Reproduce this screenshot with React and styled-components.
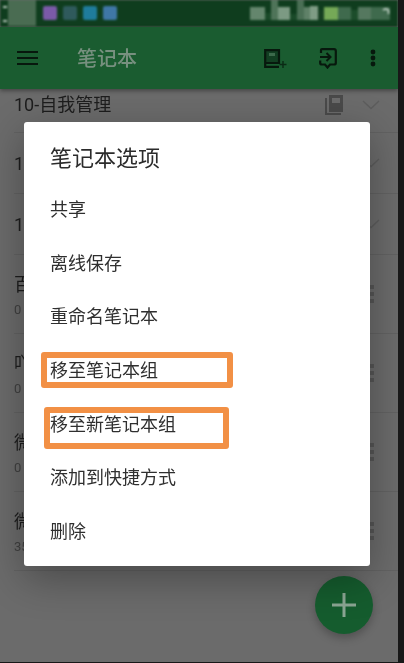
import React from "react";
import styled, { createGlobalStyle } from "styled-components";

const Global = createGlobalStyle`
  html, body { margin: 0; padding: 0; background: #1a1a1a; }
  body { font-family: "Roboto", "Noto Sans CJK SC", sans-serif; overflow: hidden; }
`;
const Shell = styled.div`
  width: 404px; height: 663px; display: flex; background: #181818; overflow: hidden; padding: 0 6px 1px 0; box-sizing: border-box;
`;
const Phone = styled.div`
  position: relative; flex: 1; min-width: 0; display: flex; flex-direction: column; background: #6b6b6b; overflow: hidden;
`;
const StatusBar = styled.div`
  position: relative; height: 27px; flex: none; background: #0f3d1e; display: flex; align-items: flex-start; justify-content: space-between;
  padding-right: 8px; filter: blur(0.8px);
`;
const StatusLeft = styled.div`display: flex; align-items: center; height: 26px;`;
const Marks = styled.div`
  width: 8px; height: 100%; box-sizing: border-box; padding: 6px 1px 4px 3px; display: flex; flex-direction: column; justify-content: space-between;
  i { display: block; height: 2px; width: 4px; background: #b9c9bd; }
`;
const ClockBlur = styled.div`width: 28px; height: 26px; background: #4a6c52; margin-right: 7px;`;
const AppIcon = styled.div`
  width: 14px; height: 14px; margin-right: 6px; background: ${p => p.$c}; border-radius: 2px;
`;
const StatusRight = styled.div`display: flex; align-items: flex-end; height: 20px;`;
const Pixel = styled.div`width: ${p => p.$w}px; height: ${p => p.$h}px; background: ${p => p.$c};`;
const Hook = styled.svg`position: absolute; left: 382px; top: 8px;`;
const Toolbar = styled.header`
  height: 62px; flex: none; background: #1a5c30; display: flex; align-items: center; padding: 0 22px 0 17px;
  box-shadow: 0 2px 4px rgba(0,0,0,.35); z-index: 1; filter: blur(0.45px);
`;
const Burger = styled.div`
  width: 21px; height: 14px; flex: none; display: flex; flex-direction: column; justify-content: space-between; margin-right: 39px;
  span { display: block; height: 2px; background: #07180d; }
`;
const Title = styled.div`flex: 1; font-size: 20px; line-height: 24px; padding-top: 2px; font-weight: 500; color: #77907f;`;
const ToolIcon = styled.svg`flex: none; display: block; margin-left: ${p => p.$ml}px;`;
const List = styled.div`flex: 1; display: flex; flex-direction: column; filter: blur(0.4px);`;
const Row = styled.div`
  height: ${p => p.$h}px; flex: none; box-sizing: border-box; margin-left: 14px; padding-right: 18px; padding-bottom: ${p => p.$pb || 0}px;
  border-bottom: 1px solid #626262; display: flex; align-items: center; justify-content: space-between;
`;
const RowText = styled.div`min-width: 0; padding-top: ${p => p.$pt || 0}px;`;
const RowTitle = styled.div`font-size: 18px; line-height: 24px; color: #1d1d1d; white-space: nowrap;`;
const RowSub = styled.div`font-size: 13px; line-height: 18px; margin-top: 4px; color: #404040; white-space: nowrap;`;
const RowTools = styled.div`display: flex; align-items: center; gap: 18px;`;
const Dots = styled.div`
  width: 4px; display: flex; flex-direction: column; gap: 3px; margin-right: 6px;
  i { display: block; width: 4px; height: 4px; background: #565656; }
`;
const Dialog = styled.div`
  position: absolute; left: 24px; top: 122px; width: 346px; height: 444px; box-sizing: border-box; background: #fff; border-radius: 3px;
  box-shadow: 0 12px 40px rgba(0,0,0,.32); padding: 23px 0 7px; display: flex; flex-direction: column; z-index: 2;
`;
const DialogTitle = styled.div`
  font-size: 22px; line-height: 28px; padding: 0 26px; height: 36px; flex: none; box-sizing: border-box; color: #2b2b2b; filter: blur(0.3px);
`;
const Item = styled.div`
  position: relative; height: 53.7px; flex: none; display: flex; align-items: center; padding-left: 26px; font-size: 18px; color: #2f2f2f;
  span { filter: blur(0.3px); position: relative; }
`;
const Highlight = styled.div`
  position: absolute; left: ${p => p.$l}px; top: ${p => p.$t}px; width: ${p => p.$w}px; height: ${p => p.$h}px; box-sizing: border-box;
  border: 6px solid #f29045; border-radius: 3px; filter: blur(0.3px);
`;
const Fab = styled.div`
  position: absolute; left: 315px; top: 576px; width: 58px; height: 58px; border-radius: 50%; background: #155c2e; z-index: 1;
  box-shadow: 0 4px 8px rgba(0,0,0,.25); display: flex; align-items: center; justify-content: center; filter: blur(0.3px);
`;

const items = [
  { t: "共享" },
  { t: "离线保存" },
  { t: "重命名笔记本" },
  { t: "移至笔记本组", box: { l: 17, t: 10, w: 192, h: 36 } },
  { t: "移至新笔记本组", box: { l: 20, t: 11, w: 185, h: 42 } },
  { t: "添加到快捷方式" },
  { t: "删除" },
];
const pixels = [
  [15, 13, "#64866d"], [6, 7, "#1a4a29"], [7, 20, "#4f7459"], [12, 13, "#7c9a83"], [7, 6, "#1a4a29"], [7, 20, "#4a6f55"], [6, 13, "#5f8168"], [8, 14, "#7f9c85"],
  [6, 10, "#163f22"], [14, 13, "#75a957"], [13, 13, "#3f6a4d"], [7, 10, "#1c4d2b"], [13, 13, "#55785f"], [19, 13, "#3f6a4d"],
];
const lower = [["百", "0"], ["吖", "0"], ["微", "0"], ["微", "35"]];
const Chevron = () => (
  <svg width="18" height="10" viewBox="0 0 18 10" fill="none" stroke="#5d5d5d" strokeWidth="1.4" style={{ display: "block" }}>
    <path d="M1 1 L9 8.5 L17 1" />
  </svg>
);

export default function App() {
  return (
    <Shell>
      <Global />
      <Phone>
        <StatusBar>
          <StatusLeft>
            <Marks><i /><i /></Marks>
            <ClockBlur />
            <AppIcon $c="#7a5aa8" />
            <AppIcon $c="#2f5a5c" />
            <AppIcon $c="#1f7c9c" />
            <AppIcon $c="#3f77a6" />
          </StatusLeft>
          <StatusRight>
            {pixels.map(([w, h, c], i) => <Pixel key={i} $w={w} $h={h} $c={c} />)}
          </StatusRight>
          <Hook width="8" height="7" viewBox="0 0 8 7" fill="none" stroke="#d8e2da" strokeWidth="1.4"><path d="M1 2 Q4 0 6.5 2 V6" /></Hook>
        </StatusBar>
        <Toolbar>
          <Burger><span /><span /><span /></Burger>
          <Title>笔记本</Title>
          <ToolIcon $ml={0} width="23" height="19" viewBox="0 0 23 19" fill="none">
            <path d="M2 2 H14 V13 H2 Z" fill="#123f22" />
            <path d="M1.2 1.2 H15 V14 H1.2 Z M1.2 14 V17.8 H15" stroke="#07180d" strokeWidth="2.2" />
            <path d="M5 4 H11 V7 H5 Z" fill="#3c6a4b" />
            <path d="M19 12 V19 M15.5 15.5 H22.5" stroke="#0b2a15" strokeWidth="1.4" />
          </ToolIcon>
          <ToolIcon $ml={32} width="18" height="21" viewBox="0 0 18 21" fill="none" stroke="#07180d" strokeWidth="2.2">
            <path d="M2 5 V2 Q2 1.2 3 1.2 H15 Q16.8 1.2 16.8 3 V15 Q16.8 16.5 15 16.5 H11 L8.5 19.5 L6 16.5 H3 Q1.2 16.5 1.2 15 V12.5" />
            <path d="M1 9 H11 M7.5 5 L11.5 9 L7.5 13" strokeWidth="2" />
          </ToolIcon>
          <ToolIcon $ml={33} width="6" height="18" viewBox="0 0 6 18" fill="#07180d">
            <circle cx="3" cy="3" r="2.4" /><circle cx="3" cy="9" r="2.4" /><circle cx="3" cy="15" r="2.4" />
          </ToolIcon>
        </Toolbar>
        <List>
          <Row $h={44} $pb={12}>
            <RowText><RowTitle>10-自我管理</RowTitle></RowText>
            <RowTools>
              <svg width="19" height="20" viewBox="0 0 19 20" fill="#4a4a4a" style={{ display: "block" }}>
                <path d="M4 0 H18 V17 H4 Z M7 3 V8 H15 V3 Z" fillRule="evenodd" /><path d="M0 3 H2 V18 H16 V20 H0 Z" />
              </svg>
              <Chevron />
            </RowTools>
          </Row>
          <Row $h={61}>
            <RowText $pt={2}><RowTitle>1</RowTitle></RowText>
            <RowTools><Chevron /></RowTools>
          </Row>
          <Row $h={61}>
            <RowText $pt={2}><RowTitle>1</RowTitle></RowText>
            <RowTools><Chevron /></RowTools>
          </Row>
          {lower.map(([title, sub], i) => (
            <Row $h={79} key={i}>
              <RowText $pt={3}><RowTitle>{title}</RowTitle><RowSub>{sub}</RowSub></RowText>
              <Dots><i /><i /><i /></Dots>
            </Row>
          ))}
        </List>
        <Dialog>
          <DialogTitle>笔记本选项</DialogTitle>
          {items.map(it => (
            <Item key={it.t}>
              {it.box && <Highlight $l={it.box.l} $t={it.box.t} $w={it.box.w} $h={it.box.h} />}
              <span>{it.t}</span>
            </Item>
          ))}
        </Dialog>
        <Fab>
          <svg width="26" height="26" viewBox="0 0 26 26" stroke="#8ba593" strokeWidth="3"><path d="M13 1 V25 M1 13 H25" /></svg>
        </Fab>
      </Phone>
    </Shell>
  );
}
